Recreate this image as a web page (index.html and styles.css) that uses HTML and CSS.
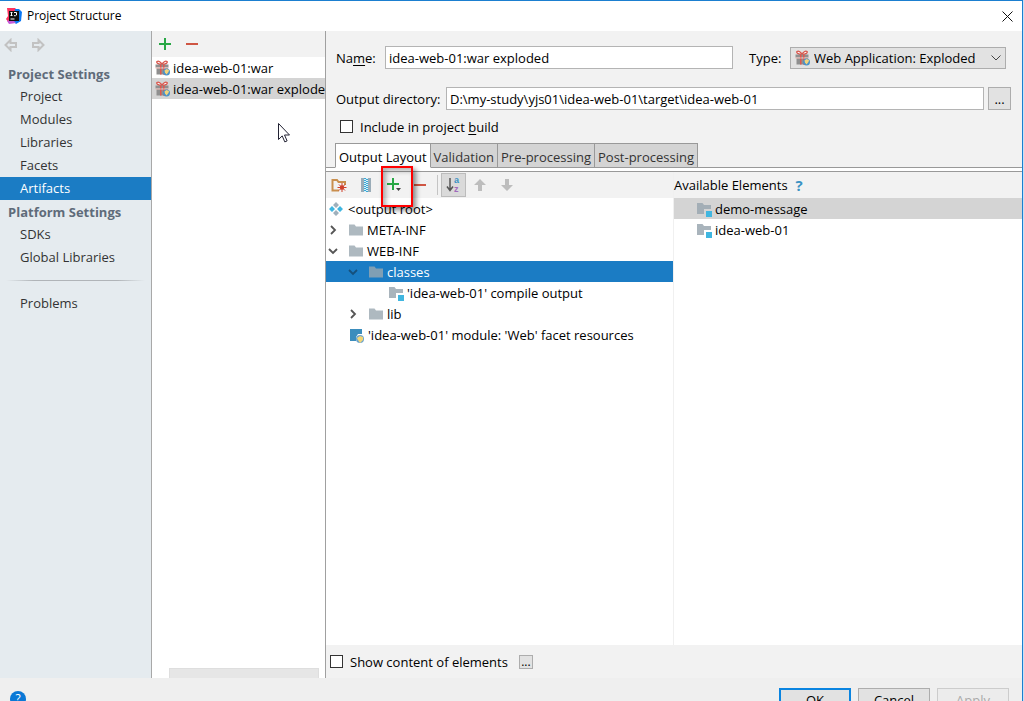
FILE: index.html
```html
<!DOCTYPE html>
<html lang="en">
<head>
<meta charset="utf-8">
<title>Project Structure</title>
<link rel="stylesheet" href="styles.css">
</head>
<body>
<svg class="defs" aria-hidden="true">
  <symbol id="gift" viewBox="0 0 16 16">
    <path d="M2 1.500c1.500-1 4 .5 5 3 1-2.500 3.500-4 5-3 1 1-1 3-5 3s-6-2-5-3z" fill="#fff" stroke="#d9574d" stroke-width="1.300"/>
    <path d="M0.500 4.500h13v3h-13zM1.500 8.300h11.500v6.200h-11.500z" fill="#8f8f8f"/>
    <path d="M5 4.500h1.500v10h-1.500zM8 4.500h1.500v10h-1.500z" fill="#e0574d"/>
    <path d="M0.500 7.500h13v1h-13z" fill="#e8b0aa"/>
    <circle cx="11.500" cy="12" r="3.500" fill="#4b93c9"/>
    <path d="M9.500 10.500l2-1.500 2.500 1-.5 2-2 2.500-1.500-2z" fill="#f3d47a"/>
  </symbol>
  <symbol id="folder" viewBox="0 0 16 14">
    <path d="M1 1.500h5.500l1.500 2h7v9h-14z" fill="#9aa7b0" fill-opacity=".8"/>
  </symbol>
  <symbol id="module" viewBox="0 0 16 16">
    <path d="M1 2h5.500l1.500 2h7v4h-7v5h-7z" fill="#9aa7b0" fill-opacity=".85"/>
    <path d="M10 10h6v6h-6z" fill="#40b6e0"/>
  </symbol>
  <symbol id="right" viewBox="0 0 10 10"><path d="M3 1l4 4-4 4" fill="none" stroke="currentColor" stroke-width="1.800"/></symbol>
  <symbol id="down" viewBox="0 0 10 10"><path d="M1 3l4 4 4-4" fill="none" stroke="currentColor" stroke-width="1.800"/></symbol>
  <symbol id="plus" viewBox="0 0 12 12"><path d="M5 0h2v5h5v2h-5v5h-2v-5h-5v-2h5z" fill="#28a745"/></symbol>
  <symbol id="minus" viewBox="0 0 12 12"><path d="M0 5h12v2h-12z" fill="#cf5643"/></symbol>
  <symbol id="arrow" viewBox="0 0 14 14"><path d="M1.500 7l5-5v3h5.500v4h-5.500v3z" fill="none" stroke="#c2c2c2" stroke-width="2"/></symbol>
  <symbol id="up" viewBox="0 0 12 12"><path d="M6 0l6 6h-4v6h-4v-6h-4z" fill="#bdbdbd"/></symbol>
</svg>

<div class="window">
  <header class="titlebar">
    <svg class="logo" viewBox="0 0 16 16"><path d="M1 0l8 0 3 3-1 12-8 0-3-4 2-3z" fill="#fe315d"/><path d="M9 1l4 0 3 3-1 9-5 3-3-3z" fill="#0877f4"/><path d="M1 13l5-2 4 4-7 1z" fill="#c45bd8"/><path d="M3 3h10v10h-10z" fill="#111"/><path d="M4.500 4.500h2M5.500 4.500v3M4.500 7.500h2M8 4.500h2.500v2.500l-1 .7h-1.500M4.500 11h4" fill="none" stroke="#fff"/></svg>
    <h1 class="title">Project Structure</h1>
    <button class="close" aria-label="Close"><svg viewBox="0 0 11 11"><path d="M0.500 0.500l10 10M10.500 0.500l-10 10" stroke="#111" fill="none"/></svg></button>
  </header>

  <main class="content">
    <nav class="sidebar">
      <div class="history">
        <button aria-label="Back"><svg class="i14"><use href="#arrow"/></svg></button>
        <button aria-label="Forward"><svg class="i14 flip"><use href="#arrow"/></svg></button>
      </div>
      <h2>Project Settings</h2>
      <a href="#">Project</a>
      <a href="#">Modules</a>
      <a href="#">Libraries</a>
      <a href="#">Facets</a>
      <a href="#" class="current">Artifacts</a>
      <h2>Platform Settings</h2>
      <a href="#">SDKs</a>
      <a href="#">Global Libraries</a>
      <hr>
      <a href="#">Problems</a>
    </nav>

    <section class="artifacts">
      <div class="artifact-tools">
        <button aria-label="Add"><svg class="i12"><use href="#plus"/></svg></button>
        <button aria-label="Remove"><svg class="i12"><use href="#minus"/></svg></button>
      </div>
      <ul class="artifact-list">
        <li><svg class="i16"><use href="#gift"/></svg>idea-web-01:war</li>
        <li class="chosen"><svg class="i16"><use href="#gift"/></svg>idea-web-01:war exploded</li>
      </ul>
      <div class="scroll-thumb"></div>
      <svg class="cursor" viewBox="0 0 12 20"><path d="M.5.5v16l3.700-3.600 2.600 6 2.300-1-2.600-5.900h5z" fill="#fff" stroke="#223"/></svg>
    </section>

    <section class="editor">
      <form class="form">
        <div class="row name-row">
          <label for="name">Na<u>m</u>e:</label>
          <input id="name" class="field" type="text" value="idea-web-01:war exploded">
          <label class="type-label" for="type">Type:</label>
          <div class="select-box">
            <svg class="i16 select-icon"><use href="#gift"/></svg>
            <select id="type"><option>Web Application: Exploded</option></select>
            <svg class="i10 select-arrow" viewBox="0 0 10 10"><path d="M.5 2.500l4.500 4.500 4.500-4.500" fill="none" stroke="#444"/></svg>
          </div>
        </div>
        <div class="row dir-row">
          <label for="dir">Output directory:</label>
          <input id="dir" class="field" type="text" value="D:\my-study\yjs01\idea-web-01\target\idea-web-01">
          <button type="button" class="dots" aria-label="Browse">...</button>
        </div>
        <div class="row check-row">
          <input id="include" class="check" type="checkbox">
          <label for="include">Include in project <u>b</u>uild</label>
        </div>
      </form>

      <div class="tabs" role="tablist">
        <button role="tab" aria-selected="true">Output Layout</button>
        <button role="tab">Validation</button>
        <button role="tab">Pre-processing</button>
        <button role="tab">Post-processing</button>
      </div>

      <div class="panes">
        <div class="pane">
          <div class="pane-tools">
            <button aria-label="New folder"><svg class="i16" viewBox="0 0 16 16"><path d="M8 13.500h-6.500v-10.500h4.500l1.500 2h6.500v3" fill="none" stroke="#c98f4e" stroke-width="2"/><path d="M11 6v9M6.500 10.500h9M8 7.500l6 6M14 7.500l-6 6" stroke="#d0402b"/><circle cx="11" cy="10.500" r="2.200" fill="#d0402b"/></svg></button>
            <button class="archive" aria-label="New archive"><svg class="i16" viewBox="0 0 16 16"><path d="M3 1h10v14h-10z" fill="#9aacb8"/><path d="M6 1h4v14h-4z" fill="#d8f0fa"/><path d="M7 1v14M9 2v13" stroke="#38a9d6" stroke-width="2" stroke-dasharray="1 1"/></svg></button>
            <button class="add" aria-label="Add copy of"><svg class="i16" viewBox="0 0 16 16"><path d="M5 1h2v5h5v2h-5v5h-2v-5h-5v-2h5z" fill="#28a745"/><path d="M9 11h5l-2.500 3z" fill="#444"/></svg><span class="callout"></span></button>
            <button aria-label="Remove"><svg class="i12"><use href="#minus"/></svg></button>
            <span class="divider"></span>
            <button class="sort" aria-label="Sort by name" aria-pressed="true"><svg class="i16" viewBox="0 0 16 16"><path d="M4 1v12M1 9.500l3 4 3-4" fill="none" stroke="#555" stroke-width="1.500"/><text x="8" y="6" class="letter-a">a</text><text x="8" y="15" class="letter-z">z</text></svg></button>
            <button aria-label="Move up"><svg class="i12"><use href="#up"/></svg></button>
            <button aria-label="Move down"><svg class="i12 turn"><use href="#up"/></svg></button>
          </div>
          <ul class="tree">
            <li class="root"><svg class="i14" viewBox="0 0 14 14"><path d="M7 0l3 3-3 3-3-3zM7 8l3 3-3 3-3-3z" fill="#9fb0bc"/><path d="M3 4l3 3-3 3-3-3zM11 4l3 3-3 3-3-3z" fill="#40b6e0"/></svg>&lt;output root&gt;</li>
            <li><svg class="i10"><use href="#right"/></svg><svg class="i16"><use href="#folder"/></svg>META-INF</li>
            <li><svg class="i10"><use href="#down"/></svg><svg class="i16"><use href="#folder"/></svg>WEB-INF</li>
            <li class="level1 active"><svg class="i10"><use href="#down"/></svg><svg class="i16"><use href="#folder"/></svg>classes</li>
            <li class="level2 leaf"><svg class="i16"><use href="#module"/></svg>'idea-web-01' compile output</li>
            <li class="level1"><svg class="i10"><use href="#right"/></svg><svg class="i16"><use href="#folder"/></svg>lib</li>
            <li class="leaf facet"><svg class="i16" viewBox="0 0 16 16"><path d="M1 2h12v5h-4l-2 3v4h-6z" fill="#3b8dbd"/><circle cx="11" cy="12" r="4" fill="#6ba3cd"/><path d="M8 11l3-2 3 1v3l-3 3-2-3z" fill="#f4d675"/></svg>'idea-web-01' module: 'Web' facet resources</li>
          </ul>
        </div>
        <div class="pane available">
          <div class="pane-tools"><h3>Available Elements</h3><button class="help" aria-label="Help">?</button></div>
          <ul class="tree">
            <li class="chosen"><svg class="i16"><use href="#module"/></svg>demo-message</li>
            <li><svg class="i16"><use href="#module"/></svg>idea-web-01</li>
          </ul>
        </div>
      </div>

      <div class="show-row">
        <input id="show" class="check" type="checkbox">
        <label for="show">Show content of elements</label>
        <button class="dots small" aria-label="Options">...</button>
      </div>
    </section>
  </main>

  <footer class="footer">
    <button class="help-round" aria-label="Help">?</button>
    <button class="action primary">OK</button>
    <button class="action">Cancel</button>
    <button class="action" disabled>Apply</button>
  </footer>
</div>
</body>
</html>
```
FILE: styles.css
```css
* { box-sizing: border-box; }
body {
  margin: 0;
  background: #c8e0f4;
  color: #000;
  font: 13px/20px "Open Sans", "Noto Sans", sans-serif;
}
button, input, select { font: inherit; color: inherit; }
button { padding: 0; border: 0; background: none; display: flex; align-items: center; justify-content: center; }
h1, h2, h3, ul { margin: 0; padding: 0; font-size: inherit; font-weight: normal; list-style: none; }
svg { display: block; flex: none; }
u { text-underline-offset: 2px; }
.defs { display: none; }
.i10 { width: 10px; height: 10px; }
.i12 { width: 12px; height: 12px; }
.i14 { width: 14px; height: 14px; }
.i16 { width: 16px; height: 16px; }
.flip { transform: scaleX(-1); }
.turn { transform: rotate(180deg); }

.window {
  display: flex;
  flex-direction: column;
  height: 100vh;
  margin-right: 1px;
  border-top: 1px solid #1b7fd0;
  border-right: 1px solid #1b7fd0;
  background: #f2f2f2;
  overflow: hidden;
}
.titlebar { display: flex; align-items: center; height: 30px; flex: none; padding: 0 9px 0 6px; background: #fff; }
.logo { width: 16px; height: 16px; }
.title { flex: 1; margin-left: 5px; font-size: 12px; }
.close svg { width: 11px; height: 11px; }

.content { display: flex; flex: 1; min-height: 0; }

.sidebar { width: 152px; flex: none; border-right: 1px solid #a8a8a8; background: #e5ebef; }
.history { display: flex; gap: 13px; height: 31px; padding: 0 4px 4px; }
.sidebar h2 { height: 23px; padding-left: 8px; line-height: 24px; font-weight: bold; color: #5f6b7a; }
.sidebar a { display: block; height: 23px; padding-left: 20px; line-height: 23px; color: #333; text-decoration: none; }
.sidebar .current { background: #1b7cc4; color: #fff; }
.sidebar hr { height: 1px; margin: 11px 6px; border: 0; background: linear-gradient(90deg, transparent, #b0b4b8 20%, #b0b4b8 80%, transparent); }

.artifacts { position: relative; display: flex; flex-direction: column; width: 174px; flex: none; border-right: 1px solid #a0a0a0; background: #fff; }
.artifact-tools { display: flex; gap: 15px; height: 26px; flex: none; padding: 0 7px; background: #f2f2f2; }
.artifact-list { flex: 1; }
.artifact-list li { display: flex; align-items: center; gap: 2px; height: 21px; padding-left: 3px; white-space: nowrap; overflow: hidden; }
.chosen { background: #d4d4d4; }
.scroll-thumb { height: 10px; margin: 0 6px 0 17px; border: 1px solid #dedede; border-bottom: 0; background: #e6e6e6; }
.cursor { position: absolute; left: 126px; top: 92px; width: 12px; height: 20px; }

.editor { display: flex; flex-direction: column; flex: 1; min-width: 0; }
.form { padding: 15px 11px 5px 10px; }
.row { display: flex; align-items: center; height: 23px; }
.name-row { margin-bottom: 18px; padding-right: 5px; }
.name-row label { width: 49px; }
.name-row .type-label { width: 41px; margin-left: 16px; }
.dir-row label { width: 110px; }
.dir-row { margin-bottom: 5px; }
.field { flex: 1; min-width: 0; height: 23px; padding: 0 3px; border: 1px solid #b4b4b4; background: #fff; }
.select-box { position: relative; width: 216px; height: 22px; }
.select-box select { appearance: none; width: 100%; height: 22px; padding: 0 20px 0 23px; border: 1px solid #adadad; border-radius: 0; background: #e2e2e2; }
.select-icon { position: absolute; left: 5px; top: 3px; }
.select-arrow { position: absolute; right: 5px; top: 6px; }
.dots { width: 23px; height: 23px; margin-left: 4px; border: 1px solid #adadad; background: #e2e2e2; line-height: 14px; }
.dots.small { width: 14px; height: 14px; margin-left: 11px; font-size: 12px; }
.check { appearance: none; width: 13px; height: 13px; margin: 0 7px 0 4px; border: 1px solid #333; background: #fff; }

.tabs { display: flex; height: 28px; flex: none; padding-left: 9px; background: linear-gradient(#999, #999) 0 24px / 100% 1px no-repeat, linear-gradient(#fff, #fff) 0 25px / 100% 3px no-repeat; }
.tabs button { height: 25px; padding: 2px 3px 0; border: 1px solid #999; border-left: 0; background: #d4d4d4; color: #333; white-space: nowrap; }
.tabs button:first-child { border-left: 1px solid #999; border-bottom-color: #fff; background: #fff; color: #000; }

.panes { display: grid; grid-template-columns: 1fr 1fr; flex: 1; border-top: 1px solid #999; background: #fff; }
.pane { display: flex; flex-direction: column; min-width: 0; border-right: 1px solid #f0f0f0; }
.available { border-right: 0; }
.pane-tools { display: flex; align-items: center; height: 26px; flex: none; padding-left: 5px; background: #f2f2f2; }
.pane-tools > button { margin-right: 11px; }
.pane-tools > .archive { margin-right: 13px; }
.pane-tools > .add { position: relative; }
.callout { position: absolute; left: -6px; top: -11px; width: 32px; height: 41px; border: 2px solid #f00; box-shadow: 3px 3px 5px rgba(0, 0, 0, .45), inset 3px 3px 5px rgba(0, 0, 0, .3); z-index: 1; }
.divider { width: 1px; height: 20px; margin-right: 3px; background: #c4c4c4; }
.pane-tools > .sort { width: 25px; height: 24px; margin-right: 8px; border: 1px solid #bcbcbc; background: #dadada; }
.pane-tools > .sort ~ button { margin-right: 15px; }
.sort svg { overflow: visible; }
.letter-a, .letter-z { font: bold 9px "Liberation Sans", sans-serif; fill: #3b92c4; }
.letter-z { fill: #a06bbd; }
.available .pane-tools { padding-left: 0; }
.pane-tools .help { margin-left: 8px; font-size: 15px; font-weight: bold; color: #3b92c4; }

.tree li { display: flex; align-items: center; height: 21px; padding-left: 2px; white-space: nowrap; }
.tree .i10 { margin-right: 10px; color: #555; }
.tree .i16 { margin-right: 3px; }
.tree .root { padding-left: 3px; }
.tree .root svg { margin-right: 5px; }
.tree .level1 { padding-left: 22px; }
.tree .level2 { padding-left: 62px; }
.tree .leaf .i16 { margin-right: 3px; }
.tree .facet { padding-left: 23px; }
.tree .active { background: #1b7cc4; color: #fff; }
.tree .active .i10 { color: #15507c; }
.available .tree li { padding-left: 22px; }

.show-row { display: flex; align-items: center; height: 33px; flex: none; }

.footer { display: flex; gap: 7px; height: 23px; flex: none; padding: 10px 13px 0 10px; background: #efefef; overflow: hidden; }
.help-round { width: 16px; height: 16px; margin: 3px auto 0 0; border-radius: 50%; background: #0a78d6; color: #fff; font-size: 12px; }
.action { width: 72px; height: 23px; flex: none; border: 1px solid #adadad; background: #e2e2e2; }
.primary { border: 2px solid #0a84e0; }
.action:disabled { border-color: #ccc; background: #ececec; color: #aaa; }
```
